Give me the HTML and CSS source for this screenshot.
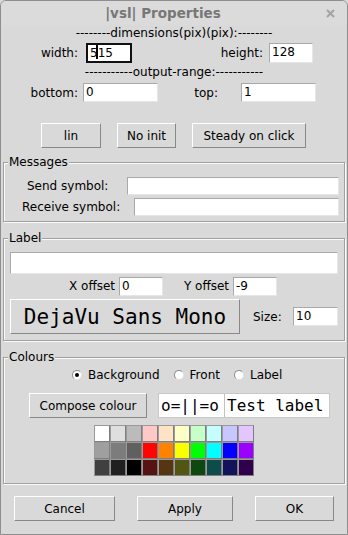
FILE: index.html
```html
<!DOCTYPE html>
<html lang="en">
<head>
    <meta charset="UTF-8">
    <meta name="viewport" content="width=device-width, initial-scale=1.0">
    <title>|vsl| Properties</title>
    <link rel="stylesheet" href="styles.css">
</head>
<body>
    <div class="window">
        <div class="titlebar">
            <span class="title">|vsl| Properties</span>
            <span class="close">
                <svg width="9" height="9" viewBox="0 0 9 9"><path d="M1 1 L8 8 M8 1 L1 8" stroke="#a3a3a3" stroke-width="2" fill="none"/></svg>
            </span>
        </div>

        <!-- dimensions -->
        <div class="sep">--------dimensions(pix)(pix):--------</div>
        <div class="row row-dim">
            <span class="lbl lbl-width">width:</span>
            <div class="entry entry-focus entry-width">5<span class="caret"></span>15</div>
            <span class="lbl lbl-height">height:</span>
            <div class="entry entry-height">128</div>
        </div>

        <!-- range -->
        <div class="sep">-----------output-range:-----------</div>
        <div class="row row-range">
            <span class="lbl lbl-bottom">bottom:</span>
            <div class="entry entry-range">0</div>
            <span class="lbl lbl-top">top:</span>
            <div class="entry entry-range">1</div>
        </div>

        <div class="row row-modes">
            <button class="btn btn-lin">lin</button>
            <button class="btn btn-init">No init</button>
            <button class="btn btn-steady">Steady on click</button>
        </div>

        <!-- messages -->
        <fieldset class="frame frame-messages">
            <legend>Messages</legend>
            <div class="row msg-row">
                <span class="msg-send">Send symbol:</span>
                <div class="entry entry-send"></div>
            </div>
            <div class="row msg-row">
                <span class="msg-receive">Receive symbol:</span>
                <div class="entry entry-receive"></div>
            </div>
        </fieldset>

        <!-- label -->
        <fieldset class="frame frame-label">
            <legend>Label</legend>
            <div class="entry entry-label"></div>
            <div class="row offset-row">
                <span class="lbl lbl-x">X offset</span>
                <div class="entry entry-offset">0</div>
                <span class="lbl lbl-y">Y offset</span>
                <div class="entry entry-offset">-9</div>
            </div>
            <div class="row font-row">
                <button class="btn btn-font">DejaVu Sans Mono</button>
                <span class="lbl-size">Size:</span>
                <div class="entry entry-size">10</div>
            </div>
        </fieldset>

        <!-- colours -->
        <fieldset class="frame frame-colours">
            <legend>Colours</legend>
            <div class="row radio-row">
                <span class="radio checked"></span><span class="radio-text">Background</span>
                <span class="radio"></span><span class="radio-text">Front</span>
                <span class="radio"></span><span class="radio-text">Label</span>
            </div>
            <div class="row compose-row">
                <button class="btn btn-compose">Compose colour</button>
                <div class="preview">
                    <span class="preview-knob">o=||=o</span>
                    <span class="preview-label">Test label</span>
                </div>
            </div>
            <div class="swatches">
                <span style="background:#ffffff"></span>
                <span style="background:#dfdfdf"></span>
                <span style="background:#bbbbbb"></span>
                <span style="background:#ffc7c6"></span>
                <span style="background:#ffe3c6"></span>
                <span style="background:#feffc6"></span>
                <span style="background:#c6ffc7"></span>
                <span style="background:#c6feff"></span>
                <span style="background:#c7c6ff"></span>
                <span style="background:#e3c6ff"></span>

                <span style="background:#9f9f9f"></span>
                <span style="background:#7c7c7c"></span>
                <span style="background:#606060"></span>
                <span style="background:#ff0400"></span>
                <span style="background:#ff8300"></span>
                <span style="background:#faff00"></span>
                <span style="background:#00ff04"></span>
                <span style="background:#00fffe"></span>
                <span style="background:#0400ff"></span>
                <span style="background:#9c00ff"></span>

                <span style="background:#404040"></span>
                <span style="background:#202020"></span>
                <span style="background:#000000"></span>
                <span style="background:#551312"></span>
                <span style="background:#553512"></span>
                <span style="background:#535512"></span>
                <span style="background:#0f4710"></span>
                <span style="background:#0e4c4c"></span>
                <span style="background:#13135b"></span>
                <span style="background:#2f004d"></span>
            </div>
        </fieldset>

        <div class="row row-actions">
            <button class="btn btn-cancel">Cancel</button>
            <button class="btn btn-apply">Apply</button>
            <button class="btn btn-ok">OK</button>
        </div>
    </div>
</body>
</html>
```

FILE: styles.css
```css
/* Reset */
* {
    box-sizing: border-box;
}

body {
    margin: 0;
    background-color: #d9d9d9;
    font-family: "DejaVu Sans", sans-serif;
    font-size: 12px;
    color: #000;
}

/* Window frame */
.window {
    width: 348px;
    height: 535px;
    border: 1px solid #8e8e8e;
    border-radius: 6px 6px 0 0;
    background-color: #d9d9d9;
    overflow: hidden;
}

.titlebar {
    height: 24px;
    display: flex;
    align-items: center;
    background-color: #dbdbdb;
}

.title {
    flex: 1;
    text-align: center;
    font-weight: bold;
    font-size: 13.5px;
    color: #777;
}

.close {
    width: 22px;
    display: flex;
    padding-left: 1px;
}

.close svg {
    display: block;
}

/* Generic rows */
.row {
    display: flex;
    align-items: center;
}

.sep {
    height: 17px;
    line-height: 17px;
    text-align: center;
}

.lbl {
    text-align: right;
    white-space: nowrap;
}

/* Entries */
.entry {
    height: 19px;
    line-height: 17px;
    padding-left: 2px;
    background-color: #fff;
    border: 1px solid;
    border-color: #a9a9a9 #e6e6e6 #e6e6e6 #a9a9a9;
    white-space: nowrap;
}

.entry-focus {
    height: 20px;
    line-height: 16px;
    padding-left: 2px;
    border: 2px solid #111;
}

.caret {
    display: inline-block;
    width: 2px;
    height: 14px;
    margin-left: -2px;
    vertical-align: -2px;
    background-color: #000;
}

/* Buttons */
.btn {
    height: 25px;
    padding: 0;
    font-family: "DejaVu Sans", sans-serif;
    font-size: 12px;
    color: #000;
    background-color: #d9d9d9;
    border: 1px solid;
    border-color: #fff #888 #888 #fff;
    border-radius: 0;
}

/* dimensions + range */
.row-dim {
    height: 22px;
}

.row-dim .entry {
    height: 20px;
}

.lbl-width {
    width: 77px;
}

.entry-width {
    width: 46px;
    margin-left: 8px;
}

.lbl-height {
    width: 131px;
}

.entry-height {
    width: 44px;
    margin-left: 6px;
}

.row-range {
    height: 23px;
}

.lbl-bottom {
    width: 77px;
}

.entry-range {
    width: 75px;
    margin-left: 5px;
}

.lbl-top {
    width: 60px;
}

.lbl-top + .entry-range {
    margin-left: 23px;
}

.row-modes {
    margin-top: 19px;
}

.btn-lin {
    width: 60px;
    margin-left: 40px;
}

.btn-init {
    width: 59px;
    margin-left: 16px;
}

.btn-steady {
    width: 114px;
    margin-left: 16px;
}

/* Label frames */
.frame {
    margin: 0 2px;
    padding: 0;
    min-width: 0;
    border: 1px solid #a0a0a0;
    box-shadow: inset 1px 1px 0 #fafafa, 1px 1px 0 #fafafa;
}

.frame legend {
    margin-left: 4px;
    padding: 0 1px;
    line-height: 16px;
    background-color: #d9d9d9;
}

.frame-messages {
    margin-top: 6px;
    padding: 5px 0 4px;
}

.msg-row {
    height: 21px;
}

.msg-row .entry {
    height: 18px;
    margin-left: auto;
    margin-right: 5px;
}

.msg-send {
    margin-left: 23px;
}

.msg-receive {
    margin-left: 18px;
}

.entry-send {
    width: 212px;
}

.entry-receive {
    width: 205px;
}

.frame-label {
    margin-top: 8px;
    padding: 6px 0 6px;
}

.entry-label {
    height: 22px;
    margin: 0 6px;
}

.offset-row {
    height: 22px;
    margin-top: 1px;
}

.lbl-x {
    width: 111px;
}

.lbl-y {
    width: 66px;
}

.entry-offset {
    width: 44px;
    margin-left: 4px;
}

.font-row {
    margin-top: 2px;
}

.btn-font {
    width: 230px;
    height: 35px;
    margin-left: 6px;
    font-family: "DejaVu Sans Mono", monospace;
    font-size: 21px;
}

.lbl-size {
    margin-left: 13px;
}

.entry-size {
    width: 45px;
    margin-left: auto;
    margin-right: 6px;
}

/* Colours */
.frame-colours {
    margin-top: 8px;
    padding: 0 0 7px;
}

.radio-row {
    height: 20px;
    padding-left: 68px;
}

.radio {
    width: 10px;
    height: 10px;
    border-radius: 50%;
    background-color: #fff;
    border: 1px solid;
    border-color: #8c8c8c #e0e0e0 #e0e0e0 #8c8c8c;
    display: flex;
    align-items: center;
    justify-content: center;
}

.radio.checked::after {
    content: "";
    width: 4px;
    height: 4px;
    border-radius: 50%;
    background-color: #000;
}

.radio-text {
    margin-left: 6px;
    margin-right: 14px;
}

.compose-row {
    margin-top: 8px;
}

.btn-compose {
    width: 118px;
    margin-left: 25px;
}

.preview {
    display: flex;
    width: 172px;
    height: 25px;
    margin-left: 11px;
    border: 1px solid #c9c9c9;
    font-family: "DejaVu Sans Mono", monospace;
    font-size: 16px;
    line-height: 23px;
    background-color: #fff;
}

.preview-knob {
    width: 66px;
    padding-left: 2px;
    border-right: 1px solid #c2c2c2;
}

.preview-label {
    flex: 1;
    padding-left: 2px;
}

.swatches {
    display: grid;
    grid-template-columns: repeat(10, 16px);
    grid-auto-rows: 17px;
    margin: 7px 0 0 90px;
}

.swatches span {
    border: 1px solid;
    border-color: #9a9a9a #7e7e7e #7e7e7e #9a9a9a;
}

/* Bottom buttons */
.row-actions {
    margin-top: 12px;
}

.btn-cancel {
    width: 101px;
    margin-left: 13px;
}

.btn-apply {
    width: 96px;
    margin-left: 22px;
}

.btn-ok {
    width: 79px;
    margin-left: 22px;
}
```
